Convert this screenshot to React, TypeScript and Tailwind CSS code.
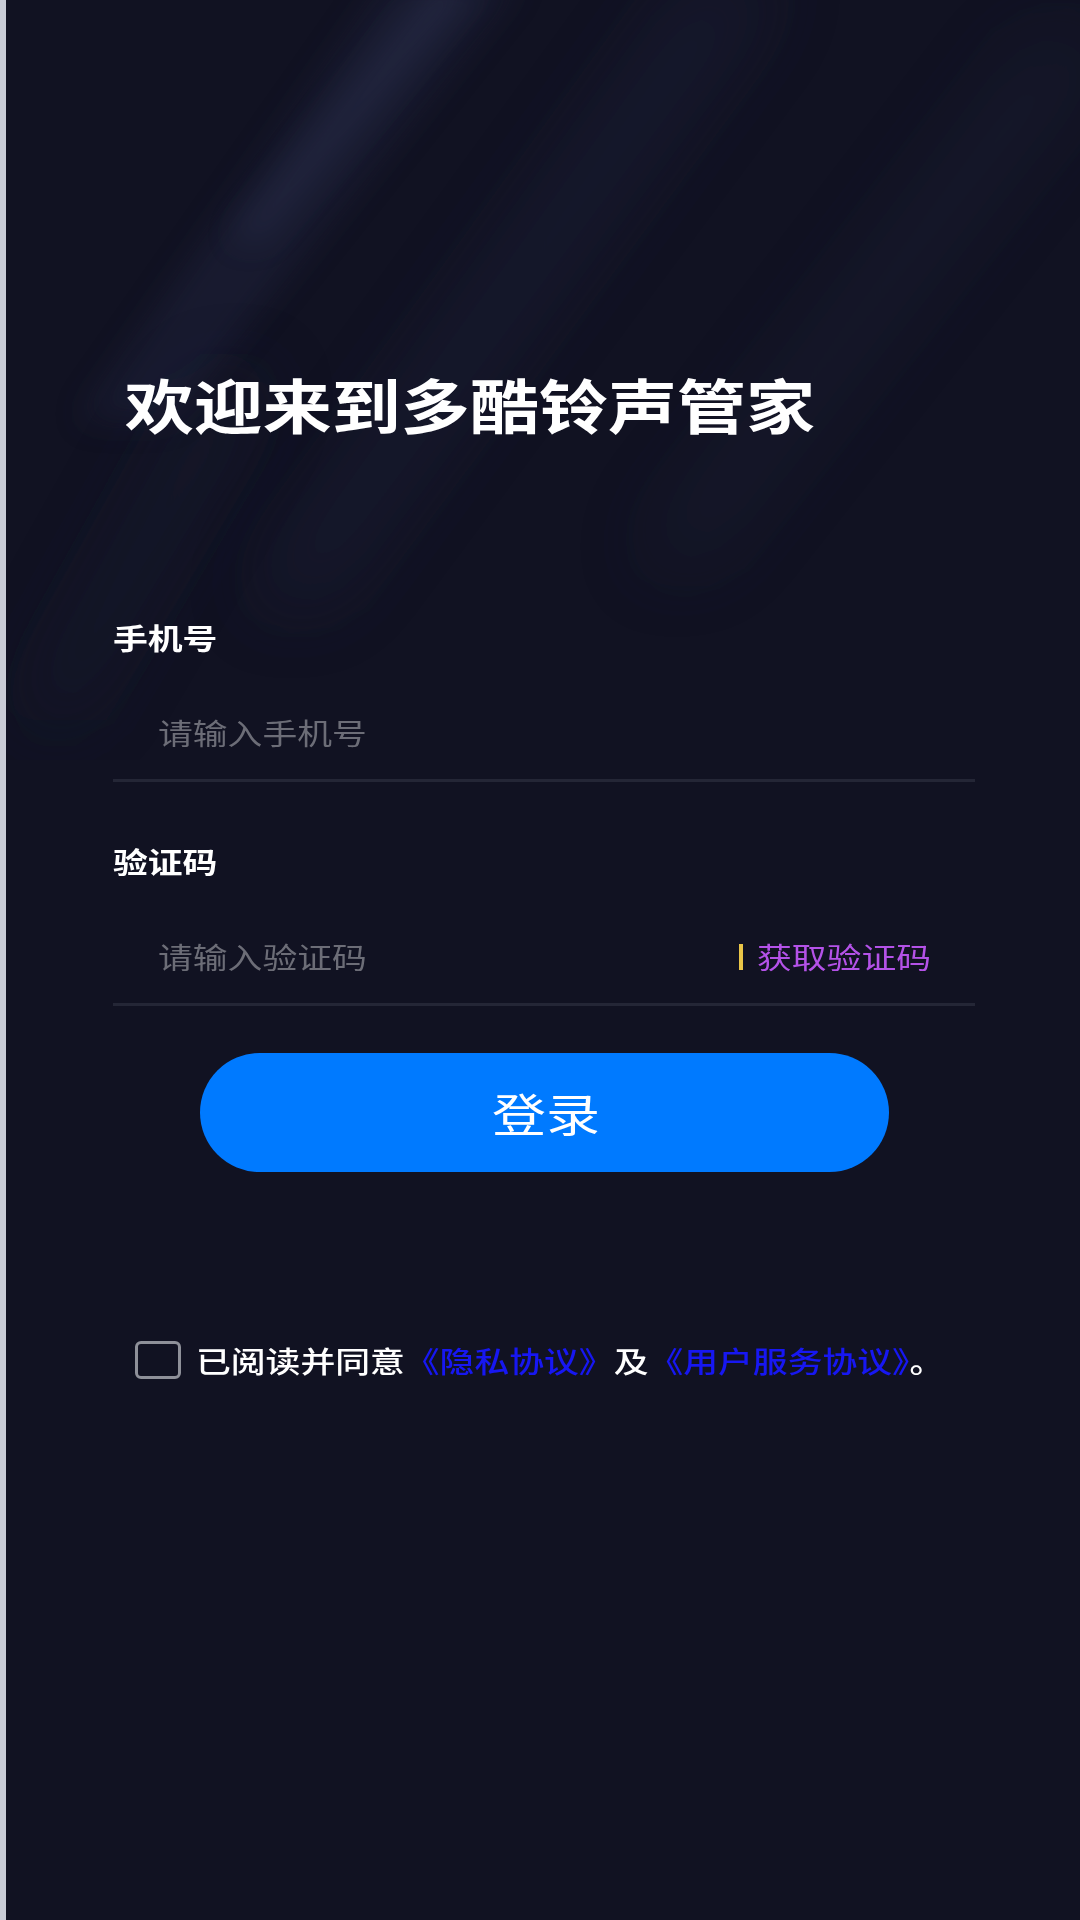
import React from "react";

// soft diagonal light streaks in the top half of the background
function Streaks() {
  return (
    <svg
      className="pointer-events-none absolute left-0 top-0"
      width="1080"
      height="760"
      viewBox="0 0 1080 760"
    >
      <defs>
        <filter id="soft" x="-50%" y="-50%" width="200%" height="200%">
          <feGaussianBlur stdDeviation="16" />
        </filter>
        <filter id="softer" x="-50%" y="-50%" width="200%" height="200%">
          <feGaussianBlur stdDeviation="40" />
        </filter>
      </defs>
      <polygon points="390,-20 520,-20 170,420 80,420" fill="#262c48" opacity="0.35" filter="url(#soft)" />
      <polygon points="440,-20 480,-20 260,240 232,240" fill="#343d5e" opacity="0.38" filter="url(#soft)" />
      <polygon points="700,-20 780,-20 320,600 250,600" fill="#20263f" opacity="0.45" filter="url(#softer)" />
      <polygon points="1040,40 1110,40 700,560 640,560" fill="#20263f" opacity="0.4" filter="url(#softer)" />
      <polygon points="210,380 270,380 70,720 20,720" fill="#1d2237" opacity="0.45" filter="url(#softer)" />
    </svg>
  );
}

function Field({ label, placeholder, action }: { label: string; placeholder: string; action?: React.ReactNode }) {
  return (
    <div>
      <div className="origin-left scale-x-[1.2] text-[29px] font-bold leading-[30px] text-white">{label}</div>
      <div className="mt-[35px] flex h-[95px] items-center border-b-[3px] border-[#242636] pl-[45px] pr-[73px]">
        <input
          placeholder={placeholder}
          className="min-w-0 flex-1 origin-left scale-x-[1.2] bg-transparent text-[29px] text-white outline-none placeholder:text-[#6c6d77]"
        />
        {action}
      </div>
    </div>
  );
}

export default function App() {
  return (
    <div className="relative min-h-[1920px] w-[1080px] overflow-hidden bg-[#111222] font-['Noto_Sans_CJK_SC',sans-serif]">
      <Streaks />
      <div className="absolute left-0 top-0 h-full w-[6px] bg-[#c9ccd6]" />

      <div className="relative pl-[113px] pr-[105px] pt-[366px]">
        <h1 className="origin-left scale-x-[1.17] pl-[10px] text-[59px] font-bold leading-[76px] text-white">
          欢迎来到多酷铃声管家
        </h1>

        <div className="mt-[180px]">
          <Field label="手机号" placeholder="请输入手机号" />
        </div>
        <div className="mt-[64px]">
          <Field
            label="验证码"
            placeholder="请输入验证码"
            action={
              <button className="flex items-center gap-[14px] text-[29px] text-[#b452e8]">
                <span className="h-[26px] w-[4px] bg-[#e9c548]" />
                <span className="inline-block origin-left scale-x-[1.2]">获取验证码</span>
              </button>
            }
          />
        </div>

        <div className="mt-[47px] flex justify-center">
          <button className="h-[119px] w-[689px] rounded-full bg-[#007aff] text-white">
            <span className="inline-block translate-x-[2px] scale-x-[1.2] text-[45px]">登录</span>
          </button>
        </div>

        <div className="mt-[168px] flex items-center pl-[22px]">
          <span className="h-[38px] w-[46px] shrink-0 rounded-[6px] border-[3px] border-[#8e9099]" />
          <p className="ml-[15px] origin-left scale-x-[1.2] whitespace-nowrap text-[29px] font-medium leading-[40px] text-white">
            已阅读并同意<span className="text-[#1717f2]">《隐私协议》</span>及<span className="text-[#1717f2]">《用户服务协议》</span>。
          </p>
        </div>
      </div>
    </div>
  );
}
